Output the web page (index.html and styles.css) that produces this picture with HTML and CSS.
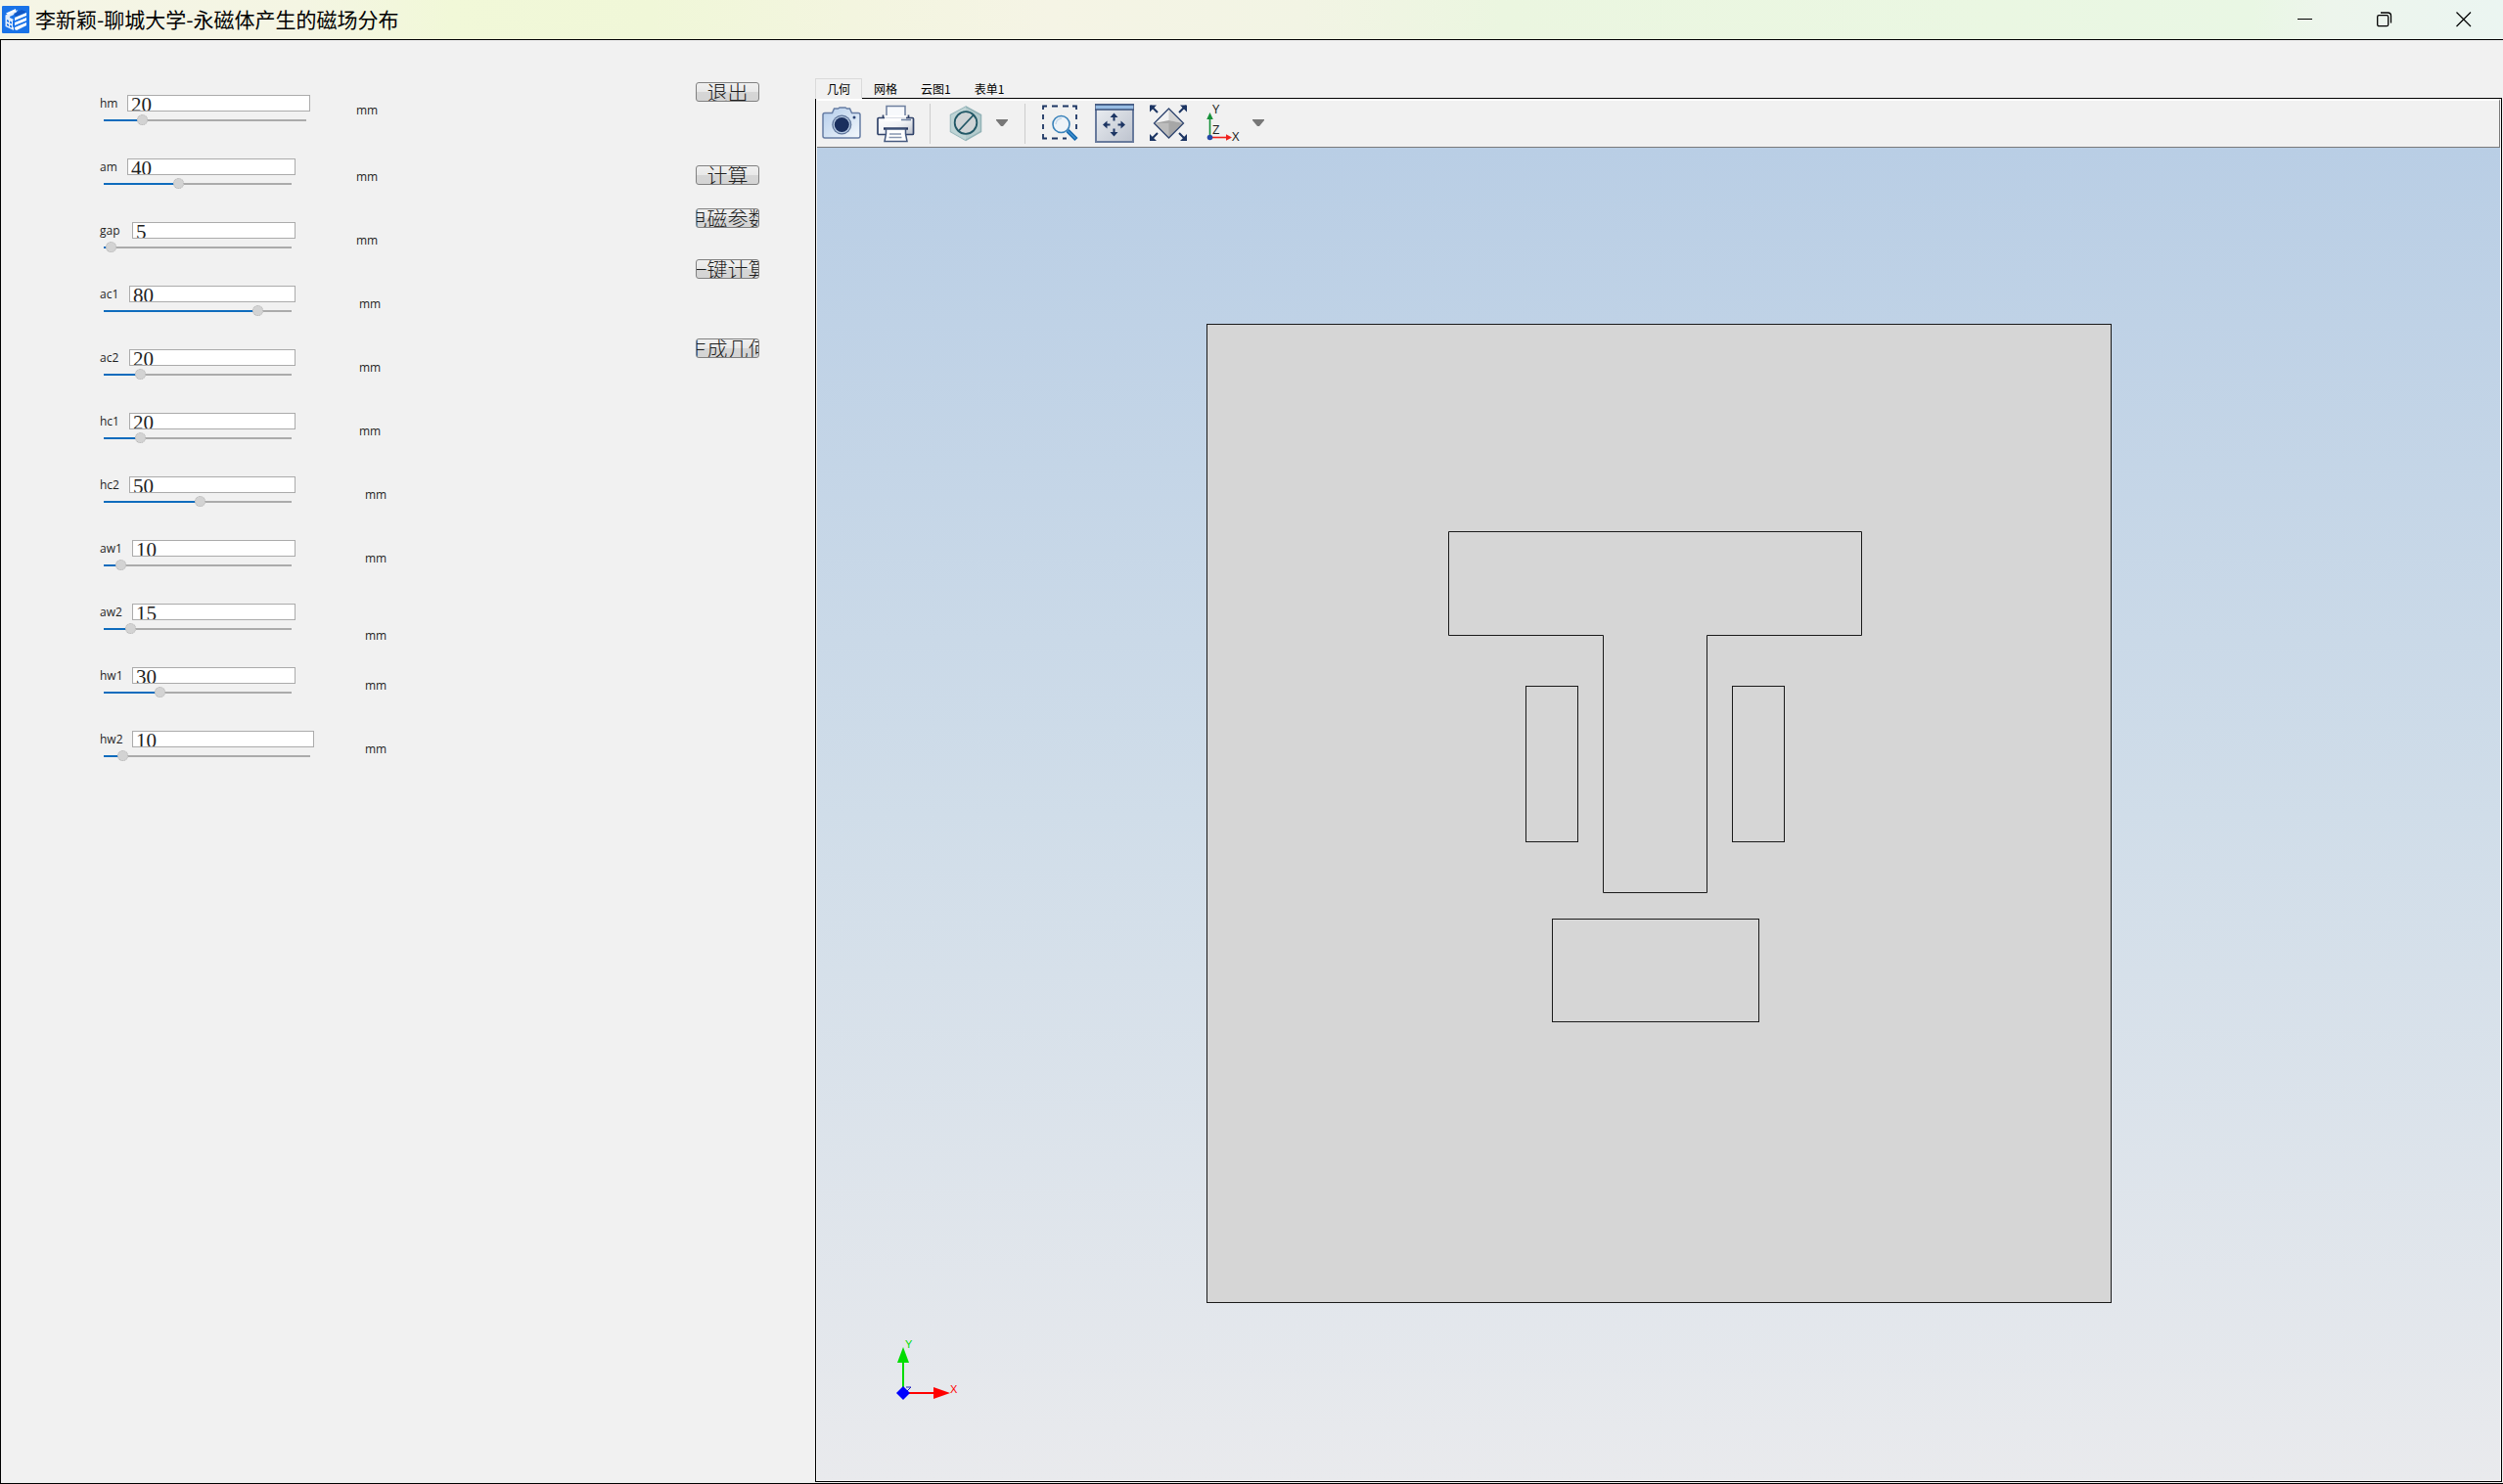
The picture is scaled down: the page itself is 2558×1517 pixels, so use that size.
FILE: index.html
```html
<!DOCTYPE html>
<html lang="zh-CN">
<head>
<meta charset="utf-8">
<title>李新颖-聊城大学-永磁体产生的磁场分布</title>
<link rel="stylesheet" href="styles.css">
</head>
<body>
<div class="window">
  <header class="titlebar">
    <svg class="app-icon" viewBox="0 0 28 28" aria-hidden="true">
      <rect width="28" height="28" rx="1" fill="#1a73e8"/>
      <path d="M3.500 9.500V21L12 25v-3l-1-.5V15l1-1-4-2v-1l6-3 2-4z" fill="#e3eefc"/>
      <path d="M5 14l2 1v2l-2-1zM8 15.500l2 1v2l-2-1zM5 18l2 1v2l-2-1zM8 19.500l2 1v2l-2-1z" fill="#1a73e8"/>
      <path d="M4 7.500 14 3v2.500L6 9z" fill="#fff"/>
      <path d="M12 8 20 4l5 2-11 5z" fill="#1257c4"/>
      <path d="M13 12l12-5v3l-12 5zM13 17l12-5v3l-12 5zM13 22l12-5v3l-10 5-2-1z" fill="#fff"/>
    </svg>
    <h1 class="titlebar-text">李新颖-聊城大学-永磁体产生的磁场分布</h1>
    <div class="window-controls">
      <button type="button" aria-label="最小化"><svg viewBox="0 0 16 16"><path d="M0 7.500h15" stroke="#000"/></svg></button>
      <button type="button" aria-label="还原"><svg viewBox="0 0 16 16"><rect x=".7" y="3.700" width="11" height="11" rx="1.500" fill="none" stroke="#000" stroke-width="1.300"/><path d="M4 1h7.500a3 3 0 0 1 3 3v7.500" fill="none" stroke="#000" stroke-width="1.300"/></svg></button>
      <button type="button" aria-label="关闭"><svg viewBox="0 0 16 16"><path d="M.5.5l14.500 14.500M15 .5.5 15" stroke="#000" stroke-width="1.200"/></svg></button>
    </div>
  </header>

  <main class="content">
    <section class="controls">
      <form class="params">
        <div class="group group-a">
          <div class="param wide">
            <div class="field"><label class="short" for="hm">hm</label><input id="hm" type="text" value="20"><input type="range" aria-label="hm" min="0" max="1000" value="176" style="--value:176"></div>
            <span class="unit high">mm</span>
          </div>
          <div class="param">
            <div class="field"><label class="short" for="am">am</label><input id="am" type="text" value="40"><input type="range" aria-label="am" min="0" max="1000" value="395" style="--value:395"></div>
            <span class="unit">mm</span>
          </div>
          <div class="param">
            <div class="field"><label class="long" for="gap">gap</label><input id="gap" type="text" value="5"><input type="range" aria-label="gap" min="0" max="1000" value="10" style="--value:10"></div>
            <span class="unit">mm</span>
          </div>
        </div>
        <div class="group group-b">
          <div class="param">
            <div class="field"><label for="ac1">ac1</label><input id="ac1" type="text" value="80"><input type="range" aria-label="ac1" min="0" max="1000" value="842" style="--value:842"></div>
            <span class="unit">mm</span>
          </div>
          <div class="param">
            <div class="field"><label for="ac2">ac2</label><input id="ac2" type="text" value="20"><input type="range" aria-label="ac2" min="0" max="1000" value="176" style="--value:176"></div>
            <span class="unit">mm</span>
          </div>
          <div class="param">
            <div class="field"><label for="hc1">hc1</label><input id="hc1" type="text" value="20"><input type="range" aria-label="hc1" min="0" max="1000" value="176" style="--value:176"></div>
            <span class="unit">mm</span>
          </div>
        </div>
        <div class="group group-c">
          <div class="param">
            <div class="field"><label for="hc2">hc2</label><input id="hc2" type="text" value="50"><input type="range" aria-label="hc2" min="0" max="1000" value="513" style="--value:513"></div>
            <span class="unit">mm</span>
          </div>
          <div class="param">
            <div class="field"><label class="long" for="aw1">aw1</label><input id="aw1" type="text" value="10"><input type="range" aria-label="aw1" min="0" max="1000" value="64" style="--value:64"></div>
            <span class="unit">mm</span>
          </div>
          <div class="param">
            <div class="field"><label class="long" for="aw2">aw2</label><input id="aw2" type="text" value="15"><input type="range" aria-label="aw2" min="0" max="1000" value="119" style="--value:119"></div>
            <span class="unit low">mm</span>
          </div>
          <div class="param">
            <div class="field"><label class="long" for="hw1">hw1</label><input id="hw1" type="text" value="30"><input type="range" aria-label="hw1" min="0" max="1000" value="285" style="--value:285"></div>
            <span class="unit">mm</span>
          </div>
          <div class="param widest">
            <div class="field"><label class="long" for="hw2">hw2</label><input id="hw2" type="text" value="10"><input type="range" aria-label="hw2" min="0" max="1000" value="69" style="--value:69"></div>
            <span class="unit">mm</span>
          </div>
        </div>
      </form>
      <div class="actions">
        <button type="button" class="exit"><span>退出</span></button>
        <button type="button" class="compute"><span>计算</span></button>
        <button type="button" class="em-params"><span>电磁参数</span></button>
        <button type="button" class="one-click"><span>一键计算</span></button>
        <button type="button" class="build"><span>生成几何</span></button>
      </div>
    </section>

    <section class="workspace">
      <div class="tabs" role="tablist">
        <button type="button" role="tab" aria-selected="true" class="active">几何</button>
        <button type="button" role="tab" aria-selected="false">网格</button>
        <button type="button" role="tab" aria-selected="false">云图1</button>
        <button type="button" role="tab" aria-selected="false">表单1</button>
      </div>
      <div class="panel">
        <div class="toolbar" role="toolbar">
          <button type="button" class="tool" aria-label="截图">
            <svg viewBox="0 0 40 40">
              <defs><linearGradient id="cam" x1="0" y1="0" x2="1" y2="1"><stop offset="0" stop-color="#b4cdec"/><stop offset=".5" stop-color="#d3e2f3"/><stop offset="1" stop-color="#f4f8fc"/></linearGradient></defs>
              <path d="M3 9.500h7.500l2-4.500h4l1.500-1h6l1.500 1h3l2 4.500H37q2 0 2 2V33q0 2-2 2H3q-2 0-2-2V11.500q0-2 2-2z" fill="url(#cam)" stroke="#667ca3" stroke-width="1.500"/>
              <circle cx="20.300" cy="21.500" r="10" fill="#5c7298"/><circle cx="20.300" cy="21.500" r="8.700" fill="#b9cce4"/><circle cx="20.300" cy="21.500" r="7.500" fill="#1a2f5e"/>
              <circle cx="33" cy="14" r="1.500" fill="#2c4474"/>
            </svg>
          </button>
          <button type="button" class="tool" aria-label="打印">
            <svg viewBox="0 0 40 40">
              <defs><linearGradient id="prn" x1="0" y1="0" x2="1" y2="1"><stop offset="0" stop-color="#fff"/><stop offset=".5" stop-color="#f1f3f6"/><stop offset="1" stop-color="#b9bec8"/></linearGradient></defs>
              <path d="M11 14V2.500h19V14" fill="#f7f9fc" stroke="#6d7f9f" stroke-width="1.500"/>
              <path d="M7.500 11.500V18h26v-6.500" fill="none" stroke="#304269" stroke-width="1.700"/>
              <rect x="2" y="14.500" width="36.500" height="17" rx="1" fill="url(#prn)" stroke="#304269" stroke-width="1.700"/>
              <path d="M9 12h22v6H9z" fill="#fff"/><path d="M9 14.500h22" stroke="#d7dce4"/>
              <path d="M26 16.500h10" stroke="#6d7f9f" stroke-width="1.600"/>
              <path d="M8 25.500h25" stroke="#1f3059" stroke-width="2.400"/>
              <path d="M10.500 26v5l-1.500 7.500h23L30.500 31v-5z" fill="#fff" stroke="#45597f" stroke-width="1.500"/>
              <path d="M14 31h12M13.500 34.500h13" stroke="#8796b0" stroke-width="1.500"/>
            </svg>
          </button>
          <span class="separator"></span>
          <button type="button" class="tool" aria-label="隐藏">
            <svg viewBox="0 0 40 40">
              <path d="M20 3 35.500 11.500v17L20 37.500 4.500 28.500v-17z" fill="#b5ccce" stroke="#93b3b7" stroke-width="1.500"/>
              <path d="M20 3v34.500L4.500 28.500v-17z" fill="#c5d9da" opacity=".7"/>
              <circle cx="20" cy="19.500" r="11.300" fill="#cfd4d6" stroke="#215766" stroke-width="1.800"/>
              <path d="M12.500 28 28 11.500" stroke="#215766" stroke-width="1.800"/>
            </svg>
          </button>
          <button type="button" class="arrow" aria-label="更多隐藏选项"><svg viewBox="0 0 12 8"><path d="M0 0h12v1L7 7H5L0 1z" fill="#777"/></svg></button>
          <span class="separator"></span>
          <button type="button" class="tool" aria-label="框选缩放">
            <svg viewBox="0 0 40 40">
              <path d="M2 6V2.500h4M11 2.500h6M22 2.500h6M32 2.500h4V6M36 11v5M36 21v5M2 11v5M2 21v5M2 31v4.500h4M11 35.500h6M22 35.500h4" fill="none" stroke="#1c3563" stroke-width="1.800"/>
              <circle cx="20.500" cy="21" r="8.500" fill="#eef3f8" stroke="#3a82ba" stroke-width="1.600"/>
              <path d="M15 21a6 6 0 0 1 6-6" fill="none" stroke="#c3d8ea" stroke-width="1.500"/>
              <path d="M27 27.500l9 9" stroke="#1769ae" stroke-width="4.500"/><path d="M27 27.500l8 8" stroke="#4495d4" stroke-width="1.300"/>
            </svg>
          </button>
          <button type="button" class="tool" aria-label="适合窗口">
            <svg viewBox="0 0 40 40">
              <defs><linearGradient id="win" x1="0" y1="0" x2="1" y2="1"><stop offset="0" stop-color="#eceff3"/><stop offset="1" stop-color="#bdc3ce"/></linearGradient></defs>
              <rect x="1" y="1" width="38" height="38" fill="url(#win)" stroke="#687a9c" stroke-width="2"/>
              <path d="M1 1h38v5H1z" fill="#97bce3"/><path d="M0 1h40M0 6h40" stroke="#3b517b" stroke-width="1.300"/>
              <path d="M19.500 13v4.500M19.500 25.500V30M11 21.500h4.500M23.500 21.500H28" stroke="#1c3563" stroke-width="2"/>
              <path d="M19.500 9.500l4 4.500h-8zM19.500 33.500l4-4.500h-8zM8 21.500l4.500-4v8zM31 21.500l-4.500-4v8z" fill="#1c3563"/>
            </svg>
          </button>
          <button type="button" class="tool" aria-label="缩放到全部">
            <svg viewBox="0 0 40 40">
              <path d="M20.500 5 5.500 20l15-3z" fill="#f2f2f2"/><path d="M20.500 5l15 15-15-3z" fill="#d3d3d3"/><path d="M5.500 20l15-3 15 3-15 15z" fill="#a7a7a7"/><path d="M5.500 20h15v15z" fill="#bcbcbc"/>
              <path d="M20.500 5l15 15-15 15-15-15z" fill="none" stroke="#304670" stroke-width="1.300"/>
              <path d="M2 2l7 7M38 2l-7 7M2 37l7-7M38 37l-7-7" stroke="#1c3563" stroke-width="2"/>
              <path d="M1 1.500h7l-7 7zM39 1.500h-7l7 7zM1 38h7l-7-7zM39 38h-7l7-7z" fill="#1c3563"/>
            </svg>
          </button>
          <button type="button" class="tool" aria-label="视图方向">
            <svg viewBox="0 0 40 40" class="axis-icon">
              <path d="M7.500 34V13" stroke="#17913a" stroke-width="1.600"/><path d="M7.500 9l3.300 7H4.200z" fill="#17913a"/>
              <path d="M7.500 34.500H25" stroke="#f0201c" stroke-width="1.600"/><path d="M30 34.500l-6-3.300v6.600z" fill="#f0201c"/>
              <circle cx="7.500" cy="34.500" r="2.800" fill="#2548a8"/>
              <text x="10" y="10">Y</text><text x="10" y="31">Z</text><text x="30" y="38">X</text>
            </svg>
          </button>
          <button type="button" class="arrow" aria-label="更多视图方向"><svg viewBox="0 0 12 8"><path d="M0 0h12v1L7 7H5L0 1z" fill="#777"/></svg></button>
        </div>
        <div class="canvas">
          <svg viewBox="0 0 1720 1362" role="img" aria-label="永磁体几何模型">
            <g fill="#d6d6d6" stroke="#1a1a1a" stroke-width="1">
              <rect x="398.500" y="180.500" width="924" height="1000"/>
              <path d="M645.500 392.500h422v106h-158v263h-106v-263h-158z"/>
              <rect x="724.500" y="550.500" width="53" height="159"/>
              <rect x="935.500" y="550.500" width="53" height="159"/>
              <rect x="751.500" y="788.500" width="211" height="105"/>
            </g>
            <path d="M87 1273h46" stroke="#f00" stroke-width="2"/><path d="M119 1267v12l17-6z" fill="#f00"/>
            <path d="M88 1273v-36" stroke="#00dc00" stroke-width="2"/><path d="M88 1226l6 16H82z" fill="#00dc00"/>
            <path d="M91 1267h5l-5 5" fill="none" stroke="#2020c0"/>
            <path d="M88 1266l7 7-7 7-7-7z" fill="#00f"/>
            <text x="90" y="1227" class="axis-label" fill="#00dc00">Y</text>
            <text x="136" y="1273" class="axis-label" fill="#f00">X</text>
          </svg>
        </div>
      </div>
    </section>
  </main>
</div>
</body>
</html>
```
FILE: styles.css
```css
* { box-sizing: border-box; }

body {
  margin: 0;
  background: #f1f1f1;
  color: #1f1f1f;
  font: 12px/16px "Open Sans", "Noto Sans CJK SC", sans-serif;
}

button { margin: 0; padding: 0; border: 0; background: none; color: inherit; font: inherit; }
svg { display: block; }

.window {
  display: flex;
  flex-direction: column;
  min-height: 100vh;
  border-bottom: 1px solid #2c4034;
}

/* Title bar */
.titlebar {
  display: flex;
  align-items: center;
  height: 40px;
  padding-left: 2px;
  background: linear-gradient(90deg, #f5f5e6 0%, #f4f5e3 12%, #f1f8d8 18%, #f0f7d8 26%, #f3f5df 34%, #f5f4e5 42%, #f2f4e4 52%, #ebf6e0 60%, #eaf7e2 80%, #e9f7e4 90%, #edf5ec 93%, #ebf5f1 100%);
}
.app-icon { width: 28px; height: 28px; }
.titlebar-text {
  flex: 1;
  margin: 0 0 0 6px;
  padding-bottom: 2px;
  color: #000;
  font: 400 21px/28px "Noto Sans CJK SC", sans-serif;
}
.window-controls { display: flex; height: 100%; }
.window-controls button { display: flex; align-items: center; justify-content: center; width: 81px; }
.window-controls svg { width: 16px; height: 16px; }

.content {
  flex: 1;
  display: grid;
  grid-template-columns: minmax(560px, 832fr) 1724fr;
  padding: 0 1px 1px 0;
  border: solid #000;
  border-width: 1px 0 1px 1px;
}

/* Parameter form */
.controls {
  display: flex;
  align-items: flex-start;
  justify-content: space-between;
  padding: 43px 57px 0 101px;
}
.params { padding-top: 13px; }
.param { display: flex; align-items: flex-start; height: 65px; }
.field { display: flex; flex-wrap: wrap; width: 200px; }
.wide .field { width: 215px; }
.widest .field { width: 219px; }
.field label { width: 30px; height: 17px; line-height: 18px; }
.field .short { width: 28px; }
.field .long { width: 33px; }

.field input[type="text"] {
  flex: 1;
  min-width: 0;
  height: 17px;
  padding: 4px 3px 0;
  border: 1px solid #ababab;
  border-radius: 0;
  background: #fff;
  color: #1f1f1f;
  font: 21px/21px "Liberation Serif", serif;
}
.field input[type="range"] {
  appearance: none;
  flex: 0 0 calc(100% - 8px);
  height: 11px;
  margin: 3px 4px 0;
  background: linear-gradient(90deg, #0f6cbd calc(5px + (100% - 11px) * var(--value) / 1000), #ababab 0) center / 100% 2px no-repeat;
}
.field input[type="range"]::-webkit-slider-thumb {
  appearance: none;
  width: 11px;
  height: 11px;
  border: 1px dotted #b5b5b5;
  border-radius: 50%;
  background: #d3d3d3;
}

.unit { width: 22px; margin: 11px 0 0 62px; }
.unit.high { margin-top: 8px; }
.unit.low { margin-top: 25px; }
.group-b .unit { margin-left: 65px; }
.group-c .unit { margin-left: 71px; }
.param.wide .unit { margin-left: 47px; }
.param.widest .unit { margin-left: 52px; }

/* Action buttons */
.actions { display: flex; flex-direction: column; }
.actions button {
  display: flex;
  align-items: center;
  justify-content: center;
  width: 65px;
  height: 20px;
  overflow: hidden;
  border: 1px solid #808080;
  border-radius: 3px;
  background: linear-gradient(#f0f0f0, #e8e8e8 50%, #d6d6d6 50%, #d4d4d4);
  font: 300 21px/18px "Noto Sans CJK SC", sans-serif;
  white-space: nowrap;
}
.actions span { padding-bottom: 2px; }
.actions .compute { margin-top: 65px; }
.actions .em-params { margin-top: 24px; }
.actions .one-click { margin-top: 32px; }
.actions .build { margin-top: 61px; }

/* Graphics workspace */
.workspace { display: flex; flex-direction: column; min-width: 0; padding-top: 39px; }
.tabs { display: flex; height: 21px; }
.tabs button {
  height: 21px;
  padding: 1px 12px 0;
  color: #000;
  font: 12px/18px "Noto Sans CJK SC", sans-serif;
}
.tabs .active {
  z-index: 1;
  padding: 0 11px;
  border: 1px solid #dadada;
  border-bottom-color: #f1f1f1;
  background: #f1f1f1;
}
.panel {
  flex: 1;
  display: flex;
  flex-direction: column;
  margin-top: -1px;
  padding: 0 1px 1px;
  border: 1px solid #000;
  background: #f6f6f6;
}
.toolbar {
  display: flex;
  gap: 15px;
  height: 50px;
  padding: 3px 5px 0;
  border: solid #fff;
  border-width: 2px 0 1px;
  border-right: 1px solid #7a7a7a;
  border-bottom-color: #7a7a7a;
  background: #f1f1f1;
}
.tool, .tool svg { width: 40px; height: 40px; }
.arrow { width: 15px; height: 40px; margin-left: -5px; }
.arrow svg { width: 12px; height: 8px; margin-left: 1px; }
.separator { width: 1px; height: 41px; margin-right: 1px; background: #cdcdcd; }
.axis-icon text { fill: #222; font: 13px "Open Sans", sans-serif; }

.canvas { flex: 1; display: flex; background: linear-gradient(#b9cee5, #d0dde9 50%, #e9eaed); }
.canvas svg { width: 100%; height: auto; }
.axis-label { font: 11px "Liberation Sans", sans-serif; }
```
